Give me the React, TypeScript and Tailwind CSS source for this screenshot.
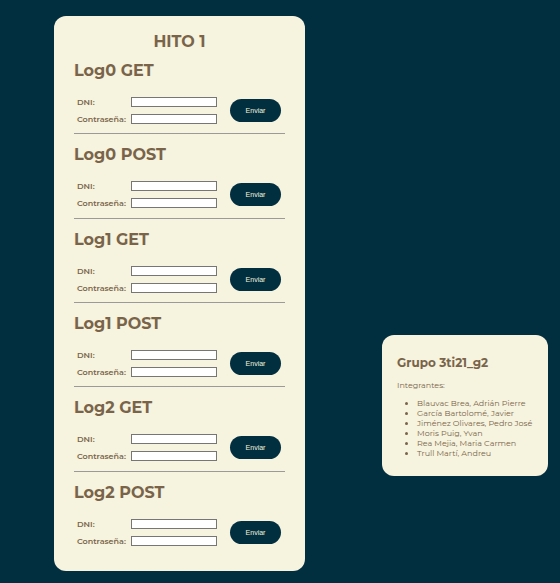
const forms = ["Log0 GET", "Log0 POST", "Log1 GET", "Log1 POST", "Log2 GET", "Log2 POST"];

const members = [
  "Blauvac Brea, Adrián Pierre",
  "García Bartolomé, Javier",
  "Jiménez Olivares, Pedro José",
  "Moris Puig, Yvan",
  "Rea Mejia, Maria Carmen",
  "Trull Martí, Andreu",
];

const inputClass = "h-[10px] w-full border border-[#767676] bg-white px-px text-[8px] leading-none text-black";

function LoginForm({ title, index }: { title: string; index: number }) {
  const last = index === forms.length - 1;
  return (
    <section className={`flex flex-1 flex-col border-b pt-[11px] ${last ? "border-transparent" : "border-[#9a9a9a]"}`}>
      <h2 className="text-[16px] font-bold leading-5">{title}</h2>
      <form className="mt-4 flex items-center pl-[3px]" onSubmit={(e) => e.preventDefault()}>
        <div className="grid grid-cols-[54px_86px] items-center gap-y-[7px] text-[8px] font-semibold leading-[10px]">
          <label htmlFor={`dni-${index}`}>DNI:</label>
          <input id={`dni-${index}`} type="text" className={inputClass} />
          <label htmlFor={`pass-${index}`}>Contraseña:</label>
          <input id={`pass-${index}`} type="password" className={inputClass} />
        </div>
        <button
          type="submit"
          className="ml-[13px] h-[23px] w-[51px] rounded-full bg-[#022f40] font-['Liberation_Sans',sans-serif] text-[7px] leading-none text-[#f6f3de]"
        >
          Enviar
        </button>
      </form>
    </section>
  );
}

export default function App() {
  return (
    <main className="flex min-h-screen justify-between bg-[#022f40] pb-3 pl-[54px] pr-3 pt-4 font-['Montserrat','Inter',sans-serif] text-[#79644a]">
      <div className="flex w-[251px] flex-col rounded-xl bg-[#f6f3de] px-5 pb-[15px] pt-[18px]">
        <h1 className="text-center text-[16px] font-bold leading-4">HITO 1</h1>
        <div className="flex flex-1 flex-col">
          {forms.map((title, index) => (
            <LoginForm key={title} title={title} index={index} />
          ))}
        </div>
      </div>
      <aside className="mt-[319px] w-[166px] self-start rounded-xl bg-[#f6f3de] px-[15px] pb-[18px] pt-5">
        <h2 className="text-[12px] font-bold leading-4">Grupo 3ti21_g2</h2>
        <p className="mt-[9px] text-[8px] leading-[10px]">Integrantes:</p>
        <ul className="mt-2 list-disc whitespace-nowrap pl-5 text-[8px] leading-[10px]">
          {members.map((name) => (
            <li key={name}>{name}</li>
          ))}
        </ul>
      </aside>
    </main>
  );
}
